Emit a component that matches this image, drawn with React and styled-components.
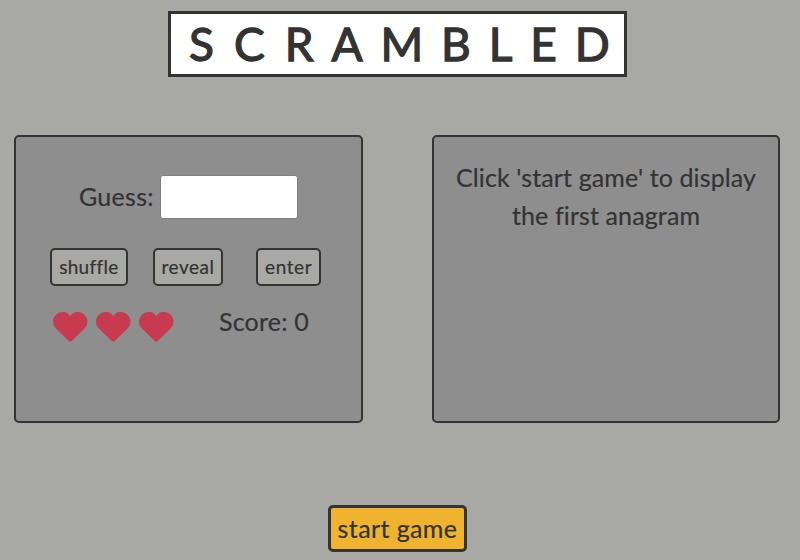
import React from "react";
import styled, { createGlobalStyle } from "styled-components";

const GlobalStyle = createGlobalStyle`
  * { box-sizing: border-box; }
  body {
    margin: 0;
    background: #a8a9a4;
    color: #333;
    font-family: Lato, sans-serif;
    -webkit-text-stroke: 0.2px #333;
  }
  button, input { font-family: inherit; color: inherit; }
`;

const Page = styled.main`
  height: 560px;
  padding: 11px 20px 0 14px;
  display: flex;
  flex-direction: column;
  align-items: center;
  overflow: hidden;
`;

const Title = styled.h1`
  width: 459px;
  height: 66px;
  margin: 0 0 0 1px;
  padding-left: 18px;
  border: 3px solid #333;
  background: #fff;
  font-size: 46px;
  font-weight: 400;
  line-height: 60px;
  letter-spacing: 17.9px;
  white-space: nowrap;
  -webkit-text-stroke: 1.3px #333;
`;

const WideLetters = styled.span`
  letter-spacing: 20px;
`;

const Board = styled.div`
  width: 766px;
  margin-top: 58px;
  display: flex;
  justify-content: space-between;
`;

const Panel = styled.section`
  width: ${(p) => p.$width}px;
  height: 288px;
  border: 2px solid #333;
  border-radius: 5px;
  background: #8e8e8e;
  font-size: 25px;
`;

const GuessRow = styled.label`
  display: flex;
  align-items: center;
  margin: 38px 0 0 63px;
`;

const Label = styled.span`
  width: 81px;
  margin-top: -2px;
  letter-spacing: ${(p) => p.$spacing}px;
  white-space: nowrap;
`;

const GuessInput = styled.input`
  width: 138px;
  height: 44px;
  border: 1px solid #808080;
  border-radius: 3px;
  background: #fff;
  font-size: 25px;
`;

const Actions = styled.div`
  display: flex;
  width: 271px;
  margin: 29px 0 0 34px;
`;

const ActionButton = styled.button`
  width: ${(p) => p.$width}px;
  height: 38px;
  margin-right: ${(p) => p.$gap || 0}px;
  padding: 0 0 2px;
  border: 2px solid #333;
  border-radius: 5px;
  background: #a8a9a4;
  font-size: 19px;
  letter-spacing: ${(p) => p.$spacing}px;
`;

const Status = styled.div`
  display: flex;
  align-items: flex-start;
  margin: 22px 0 0 37px;
`;

const Hearts = styled.div`
  display: flex;
  gap: 8.5px;
  width: 166px;
  padding-top: 4px;
`;

const HeartIcon = styled.svg`
  width: 34.5px;
  height: 30px;
  fill: #c73a50;
`;

const Message = styled.p`
  margin: 21px 0 0;
  text-align: center;
  line-height: 38px;
  white-space: nowrap;
`;

const MessageLine = styled.span`
  display: block;
  letter-spacing: ${(p) => p.$spacing}px;
`;

const StartButton = styled.button`
  width: 139px;
  height: 47px;
  margin-top: 82px;
  padding: 0 0 2px 1px;
  border: 3px solid #333;
  border-radius: 5px;
  background: #f0b32f;
  font-size: 25px;
  letter-spacing: 0.4px;
  white-space: nowrap;
`;

const Heart = () => (
  <HeartIcon viewBox="0 0 35 30" preserveAspectRatio="none" aria-hidden="true">
    <path d="M17.5 29.6Q16.7 29.6 16 29L2.9 16.4C-.8 12.6-.9 6.8 2.5 3.2 6-.5 11.5-.8 15 1.4 16.1 2 17 3 17.5 4 18 3 18.9 2 20 1.4 23.5-.8 29-.5 32.5 3.2 35.9 6.8 35.8 12.6 32.1 16.4L19 29Q18.3 29.6 17.5 29.6Z" />
  </HeartIcon>
);

export default function App() {
  return (
    <>
      <GlobalStyle />
      <Page>
        <Title><WideLetters>SC</WideLetters>RAMBLED</Title>
        <Board>
          <Panel $width={349}>
            <GuessRow>
              <Label $spacing={0.3}>Guess:</Label>
              <GuessInput />
            </GuessRow>
            <Actions>
              <ActionButton $width={78} $gap={25} $spacing={0.3}>shuffle</ActionButton>
              <ActionButton $width={71} $gap={33} $spacing={0.5}>reveal</ActionButton>
              <ActionButton $width={65} $spacing={0.6}>enter</ActionButton>
            </Actions>
            <Status>
              <Hearts>
                <Heart />
                <Heart />
                <Heart />
              </Hearts>
              <Label $spacing={0.2}>Score: 0</Label>
            </Status>
          </Panel>
          <Panel $width={348}>
            <Message>
              <MessageLine $spacing={0.12}>Click 'start game' to display</MessageLine>
              <MessageLine $spacing={0.12}>the first anagram</MessageLine>
            </Message>
          </Panel>
        </Board>
        <StartButton>start game</StartButton>
      </Page>
    </>
  );
}
